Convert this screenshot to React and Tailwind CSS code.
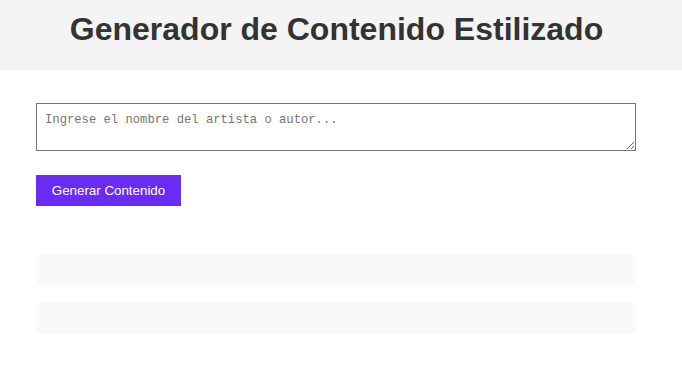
export default function App() {
  return (
    <div className="min-h-[382px] bg-white" style={{ fontFamily: '"Liberation Sans", Arial, sans-serif' }}>
      <header className="h-[70px] bg-[#f4f4f4] flex items-start justify-center pt-[11px] pr-[9px]">
        <h1 className="text-[32px] leading-[37px] font-bold text-[#333333] m-0">Generador de Contenido Estilizado</h1>
      </header>
      <main className="px-[36px] pt-[33px] w-[672px]">
        <textarea
          className="block w-[600px] h-[48px] border border-[#767676] px-[8px] pt-[9px] pb-[6px] text-[12.2px] leading-[14px] text-[#333] placeholder:text-[#757575] outline-none"
          style={{ fontFamily: '"Liberation Mono", "DejaVu Sans Mono", monospace', resize: 'both' }}
          placeholder="Ingrese el nombre del artista o autor..."
        />
        <button className="mt-[24px] h-[31px] w-[145px] bg-[#6a2cf5] text-white text-[13.33px] leading-[16px] flex items-center justify-center">
          Generar Contenido
        </button>
        <div className="mt-[48px] flex flex-col gap-[16px]">
          <div className="h-[32px] w-[600px] rounded-[5px] bg-[#f9f9f9]"></div>
          <div className="h-[31px] w-[600px] rounded-[5px] bg-[#f9f9f9]"></div>
        </div>
      </main>
    </div>
  );
}
